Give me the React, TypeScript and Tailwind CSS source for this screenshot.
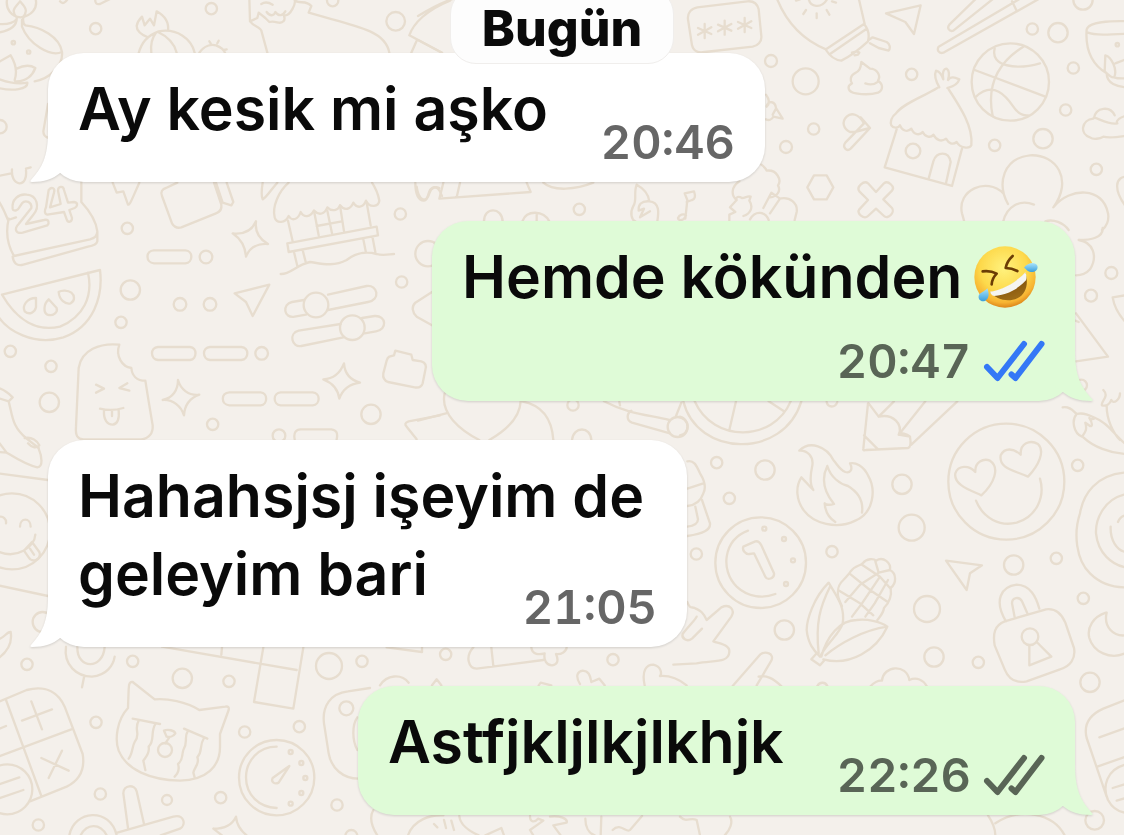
import type { ReactNode } from "react";

type Dot = [number, number, number];

/* Each patch is drawn on a grid three times finer than the page. */
function Patch({ x, y, dots, paths }: { x: number; y: number; dots: Dot[]; paths: string[] }) {
  return (
    <g transform={`translate(${x} ${y}) scale(0.33333)`}>
      {dots.map(([cx, cy, r]) => (
        <circle key={`${cx}-${cy}-${r}`} cx={cx} cy={cy} r={r} />
      ))}
      {paths.map((d) => (
        <path key={d} d={d} />
      ))}
    </g>
  );
}

function Wallpaper() {
  return (
    <svg
      aria-hidden="true"
      className="absolute inset-0 h-full w-full"
      viewBox="0 0 1124 835"
      preserveAspectRatio="xMinYMin slice"
      fill="none"
      stroke="#e7ddcf"
      strokeWidth="7"
      strokeLinecap="round"
      strokeLinejoin="round"
    >
      {/* top left: diya lamp, onion, dog, umbrella */}
      <Patch
        x={0}
        y={0}
        dots={[[287, 86, 17], [634, 26, 17], [1187, 64, 28], [998, 2, 17], [0, 380, 20], [40, 128, 5], [86, 156, 5]]}
        paths={[
          "M22 -6C14 28 36 50 62 52C92 48 116 26 106 -6M50 52C30 30 48 20 60 4C72 18 88 32 68 52",
          "M50 52C52 80 30 92 -6 98M-6 72C20 74 40 70 50 58M70 52C68 64 70 72 76 76C120 80 180 110 186 156C150 172 86 132 66 80L66 60M186 156C190 196 150 236 104 244",
          "M0 184L32 166C48 192 52 216 44 240M50 206C70 196 90 194 106 204C98 226 78 246 46 244M-6 236C30 250 60 252 82 248C84 268 40 274 -6 264M0 184L-6 188",
          "M180 4C188 14 196 8 204 -4M286 -6C284 10 290 14 300 12L336 -6",
          "M416 160C424 126 448 104 476 94C530 84 574 116 584 158M468 98C452 118 452 140 454 158M474 96C508 112 524 134 530 158M444 112C424 104 410 94 410 78C412 66 418 58 426 50L434 76L450 56L462 76L470 34C488 44 508 60 504 92",
          "M598 158C612 138 632 132 648 136C664 142 672 150 676 160M628 124L632 130M656 122L652 130M680 148L672 150",
          "M748 -6L750 64C760 78 780 82 784 92L802 158M750 64L772 54L776 38L796 54L808 66C828 60 840 76 850 64C860 56 846 44 856 46C872 46 888 10 884 0C896 14 918 -2 934 18L926 38C1000 60 1060 72 1110 94C1150 112 1164 136 1168 158M784 12C796 4 808 8 818 14M800 36C810 50 822 48 826 36C836 50 848 48 856 34",
          "M1350 2C1280 30 1240 70 1228 106L1326 158M1250 122L1234 158",
          "M144 312L130 394C130 406 136 412 146 414",
        ]}
      />

      {/* top right: password, guitar, chopsticks, ball, hut, cup */}
      <Patch
        x={660}
        y={0}
        dots={[
          [333, 183, 18], [437, 244, 39], [755, 223, 17], [461, 387, 17], [378, 441, 18], [1117, 87, 17], [1194, 98, 29], [1240, 204, 17],
          [1217, 330, 17], [1149, 416, 29], [1004, 436, 17], [1309, 508, 17], [1269, 0, 29], [1051, 246, 116], [759, 453, 22], [1372, 134, 5],
        ]}
        paths={[
          "M112 22L262 4C282 2 292 12 296 28L304 108C306 126 292 138 278 140L134 156C114 160 100 152 96 136L84 58C82 40 92 26 112 22Z",
          "M134 72V114M114 84L154 102M154 82L114 104M194 62V104M174 74L214 92M214 72L174 94M254 54V96M234 66L274 84M274 64L234 86",
          "M350 -6C380 70 430 120 498 148L612 72C626 88 628 108 624 124C600 146 572 168 544 182C526 180 508 166 498 150M510 162L620 86M596 -6L614 72M626 120L638 112L680 126C690 132 692 144 686 152L656 144L630 130M576 158L590 154L598 158L594 164L584 166",
          "M446 -4C450 22 484 26 500 0M470 40V54M438 30L430 42M500 30L508 44M408 2L420 -2M516 4L528 8",
          "M678 40L782 16L762 102L736 66Z",
          "M948 -4L868 74C860 84 868 96 880 92L1000 -4M1138 -4L850 158C836 162 830 150 836 140L1080 -4M1056 4L1070 32",
          "M944 210L1156 290M1090 140C1010 190 980 260 998 348M1004 146C990 200 1070 210 1140 190M948 290C1000 240 1040 290 1060 320C1076 344 1090 348 1104 346",
          "M1406 64C1350 62 1286 66 1280 88C1276 140 1290 190 1340 220C1340 250 1370 262 1406 262M1284 98C1310 110 1360 100 1406 102M1336 166L1334 214C1350 230 1356 234 1362 232C1374 210 1354 170 1336 166M1362 232C1374 236 1390 236 1406 234M1366 190L1392 180",
          "M604 186C602 206 598 214 584 220C570 228 570 242 576 250C560 258 562 276 588 280C612 284 640 282 654 278C670 270 670 252 654 242C664 226 650 206 630 206ZM616 250C632 256 646 252 656 244",
          "M832 264C790 290 730 310 708 340C694 350 690 366 694 376C700 386 716 384 720 376C726 392 742 398 754 386C762 406 780 406 788 396C796 412 812 414 820 404C830 422 844 426 858 416C866 430 878 436 890 426C900 444 928 448 934 436C940 380 900 320 866 268M838 262C826 240 822 224 828 212C838 214 846 226 850 238C846 220 850 206 860 206C868 212 868 226 864 240C872 228 884 232 898 238C890 260 866 262 862 264",
          "M710 388L674 502L876 558L906 446M806 536L820 484C830 454 866 452 872 486L858 550",
          "M630 384L572 446C560 456 546 442 556 428L612 370C596 342 574 336 560 350C544 366 550 386 570 396L584 396L630 384L602 352",
          "M1406 346C1380 350 1366 362 1372 370C1340 376 1300 344 1300 356C1264 360 1258 402 1290 412C1300 420 1320 416 1330 410C1350 416 1380 410 1406 406M1302 354C1308 322 1350 316 1364 346",
          "M462 526H500L520 562L500 598H462L442 562Z",
          "M624 550L648 576L672 550C684 540 706 560 696 572L670 598L696 624C706 636 684 660 672 648L648 626L624 648C612 660 588 640 598 628L624 600L598 574C588 560 612 540 624 550Z",
          "M1044 612C1010 550 1030 474 1110 466C1190 462 1240 540 1180 622C1230 560 1330 560 1344 640C1348 660 1340 680 1326 690M1030 580C980 530 890 570 906 640L912 662M1030 664C1040 620 1080 596 1122 614M1156 664C1180 656 1210 668 1226 690M1406 530C1364 526 1356 570 1406 630",
          "M318 284C330 300 330 310 320 320M320 318C326 300 346 304 348 324L368 356L340 350C336 360 326 362 318 358M338 344L348 326",
          "M76 656L82 600L74 580L102 574C108 590 104 598 96 600L80 606M76 650C70 664 54 662 54 654C58 644 70 640 78 646",
          "M304 494C312 500 318 506 320 512C350 508 366 540 354 556C364 574 350 590 330 592M238 544C214 560 212 586 230 600C226 590 236 588 246 594C256 594 264 586 272 590L268 602C280 620 274 640 250 648M208 662V644L226 636L210 622L230 600M270 658C286 630 316 634 326 660M310 624L334 578L360 596L330 640M358 596C390 588 414 610 410 636L404 660",
        ]}
      />

      {/* centre top: boat, strawberry, hand */}
      <Patch
        x={420}
        y={0}
        dots={[[478, 628, 17]]}
        paths={[
          "M-10 560C-4 604 20 610 28 580C34 560 48 560 58 564M70 548L58 596L332 576L320 548M120 548L110 592M370 548C400 576 470 568 520 548",
          "M192 664C192 620 246 620 248 664M308 662C320 630 370 630 388 664M350 640V662",
          "M650 554C640 580 652 600 640 618C628 640 636 660 646 664M650 554C676 568 686 586 688 604C664 602 654 614 656 632L672 626L660 652L690 634M688 604C720 606 716 640 712 664",
          "M-6 120L66 158M-6 48C40 20 70 6 100 -4",
        ]}
      />

      {/* left middle: calendar, camera, stall, melon, sliders, ice cream */}
      <Patch
        x={0}
        y={170}
        dots={[
          [382, 175, 17], [618, 261, 19], [391, 360, 29], [540, 403, 19], [630, 403, 19], [363, 457, 17], [31, 544, 17], [153, 589, 17],
          [148, 697, 29], [638, 763, 17], [785, 550, 19], [837, 797, 19], [1113, 733, 29], [1201, 132, 17], [1205, 336, 17], [948, 405, 37],
          [1057, 473, 37], [1284, 251, 38],
        ]}
        paths={[
          "M-6 18L34 10M36 -2C34 20 42 38 58 40C74 40 80 22 78 2M78 -4L92 -8M244 36V96C270 124 288 152 292 184V214C290 224 276 228 264 230L70 284C50 290 40 278 38 260M26 146C18 180 20 220 42 258L270 208C284 204 290 200 292 186M-6 90C8 110 16 130 24 150L48 142",
          "M38 116C34 90 56 70 80 74C112 76 120 112 100 134L78 162L132 150C148 146 148 160 142 166L68 188C46 192 42 176 56 162L94 114C96 96 76 88 66 100L58 112C54 122 40 126 38 116Z",
          "M146 60C156 48 166 56 162 68L150 112L182 102L174 62C174 48 190 46 192 60L204 98L222 96C236 98 232 110 224 114L208 120L216 144C216 156 204 160 200 148L192 126L142 134C132 132 134 120 138 112Z",
          "M338 38L350 68L370 64L384 104C390 106 400 78 418 38",
          "M486 78C480 66 488 56 498 54L532 38M642 38L664 104C666 118 660 126 648 130L544 172C530 176 522 170 516 160L486 78M648 38L668 98L694 106L700 96L680 38",
          "M768 154C764 184 776 206 804 222C770 220 748 234 738 260C736 228 724 208 698 190C732 194 756 182 768 154Z",
          "M788 38C784 64 784 80 788 88C800 82 812 60 832 38M866 38C836 64 816 110 824 142C830 162 856 160 866 138C876 154 894 150 902 126C912 144 930 142 942 122C958 138 974 132 982 112C996 126 1014 122 1020 106C1034 124 1052 118 1060 98C1070 116 1090 114 1098 92C1110 116 1136 110 1138 92C1134 70 1124 50 1116 38",
          "M864 152L878 214M1100 98L1112 166M942 122L956 196M1020 106L1032 184M982 122L996 190M950 168L1026 154M862 220L1130 170L1134 196L866 246ZM882 246L892 288M908 240L918 280M1090 208L1098 248M1118 204L1126 246M842 312C870 314 890 284 930 276C960 280 1000 292 1040 270C1070 246 1100 244 1130 252C1150 258 1170 252 1182 252",
          "M6 374L300 300C310 380 280 470 190 502C100 530 20 480 -6 438M6 374C50 450 110 486 180 470C250 440 280 380 264 308",
          "M108 384C80 384 66 408 74 424C88 436 104 428 108 412ZM146 388C130 402 130 428 142 434C160 440 174 426 170 414ZM176 366C178 390 196 404 212 400C226 392 224 376 214 368C204 360 184 360 176 366Z",
          "M462 241H556C580 242 580 278 556 280H462C436 278 436 242 462 241Z",
          "M474 531H570C592 532 592 568 570 570H474C450 568 450 532 474 531ZM630 531H724C748 532 748 568 724 570H630C606 568 606 532 630 531ZM688 667H782C804 668 804 704 782 706H688C662 704 662 668 688 667ZM842 667H938C962 668 962 704 938 706H842C818 704 818 668 842 667ZM884 808C880 788 888 778 902 778H994C1010 780 1014 790 1010 808",
          "M704 370L808 344L758 438L738 396Z",
          "M912 390L876 396C846 402 850 446 884 440L918 434M984 374L1100 348C1134 344 1142 390 1104 396L984 420M1022 462L896 482C864 490 876 534 904 528L1030 502M1086 444L1124 438C1160 436 1162 480 1128 484L1094 490",
          "M1296 366L1246 398C1234 410 1236 426 1250 440L1296 466",
          "M1168 560L1182 556L1186 542L1234 554L1238 570L1264 574C1276 578 1280 588 1276 600L1268 640C1264 652 1256 654 1244 652L1164 636C1150 630 1148 622 1150 610L1160 572C1162 564 1164 562 1168 560Z",
          "M358 524C300 518 244 540 236 594L228 770C226 796 232 808 250 808H424C446 806 460 790 458 766L446 694L436 632C410 632 396 616 394 594C366 590 346 558 358 524Z",
          "M288 644L312 656L288 668M382 640L358 654L388 662M300 716C324 722 350 720 370 714M312 720C310 750 322 764 338 764C354 762 358 742 356 720M336 722V738",
          "M534 630C542 658 566 678 598 674C570 684 554 704 552 736C544 710 520 688 488 690C518 684 534 660 534 630Z",
          "M1032 580C1034 610 1052 630 1080 638C1048 642 1028 658 1018 686C1014 658 996 638 970 628C1002 626 1022 606 1032 580Z",
          "M-6 654C10 658 24 668 38 682L26 694L-6 684M26 694C38 740 36 770 80 806L116 834M74 804C96 800 112 812 118 826C108 836 94 832 84 820",
          "M1320 736L1226 754C1214 758 1214 764 1220 770L1250 808",
          "M1246 38C1246 60 1250 90 1272 92C1288 90 1282 60 1296 54C1310 46 1320 60 1326 78",
        ]}
      />

      {/* left edge beside the third bubble */}
      <Patch
        x={0}
        y={380}
        dots={[[36, 454, 114], [128, 726, 30]]}
        paths={[
          "M116 206C126 230 130 260 112 262C80 256 40 230 20 218L-6 216M20 218L-6 184M-6 280L144 300M-6 616L144 648M-6 412C10 404 20 420 18 430M60 440C60 412 92 412 92 440M-6 514C50 540 104 500 106 464M72 512L96 486L118 516C126 540 96 550 86 532ZM90 506L102 524M-6 778C12 776 20 754 32 756C38 790 18 818 -6 836",
        ]}
      />

      {/* strip between the second and third bubbles */}
      <Patch
        x={420}
        y={380}
        dots={[[459, 75, 17], [773, 141, 30]]}
        paths={[
          "M74 40C60 100 120 150 178 180M302 64C300 110 260 150 208 180M-6 122L78 100M306 64C370 76 396 120 400 180M456 180C460 138 512 138 514 180M552 64C620 100 680 104 748 120M634 92C620 100 618 120 636 128L750 160M598 66L600 76M768 108L784 68",
        ]}
      />

      {/* right middle */}
      <Patch
        x={960}
        y={230}
        dots={[[454, 129, 18], [393, 197, 18], [364, 466, 17]]}
        paths={[
          "M358 30C390 30 430 24 428 -6M356 30C400 36 414 80 390 118C378 132 364 136 348 136M348 250L444 380L348 394M346 272L356 276M496 196L458 202C462 228 478 256 496 276",
        ]}
      />

      {/* right: wheel, pencil, flame, coin, corn, smiley, padlock, eggplant */}
      <Patch
        x={680}
        y={390}
        dots={[
          [110, 218, 17], [255, 240, 29], [148, 325, 17], [49, 492, 17], [456, 485, 17], [313, 720, 29], [666, 283, 29], [695, 413, 39],
          [741, 657, 39], [762, 801, 29], [895, 817, 17], [1001, 525, 29], [1129, 505, 17], [1193, 226, 17], [1210, 625, 17], [1230, 877, 29],
          [242, 518, 136], [979, 275, 174], [253, 416, 6], [312, 447, 6], [339, 511, 6], [318, 582, 6], [1050, 740, 25],
        ]}
        paths={[
          "M10 34C50 200 310 210 364 34M44 34C100 160 280 156 332 34M168 34L148 120M266 34L312 64M440 36C444 54 466 54 472 36",
          "M0 80C30 88 30 130 0 136M22 214C40 210 48 222 60 250C74 272 80 290 70 310C60 340 40 346 22 348M22 296L70 280M66 330L90 400C92 420 70 430 22 438M46 350L54 388C54 402 40 408 22 410",
          "M564 40L550 176C548 180 552 182 558 180L684 174C692 172 694 164 690 140L656 134C670 104 640 70 596 80L566 40M642 34L596 80M736 34L656 134M832 34L694 164M690 140C680 130 664 128 656 134M552 136L594 178",
          "M358 182C380 180 404 198 396 232C390 260 390 284 400 300L364 262C346 290 348 330 372 362C400 400 470 420 526 392C580 370 590 300 564 256C550 228 526 216 510 220C520 240 510 250 496 246C480 240 472 224 460 210C440 170 390 150 358 182Z",
          "M442 228C426 260 428 300 462 342C450 346 438 344 434 340C436 368 450 386 466 396M442 228C452 262 480 282 504 288C540 310 550 340 546 368",
          "M204 422C130 450 120 540 170 590C204 622 250 626 286 612M190 470L226 454C236 452 240 458 244 466L282 550C284 566 262 572 256 560L222 490L208 492C196 494 186 480 190 470Z",
          "M446 578C400 624 380 690 380 720C384 760 400 780 420 800C440 760 480 730 488 700C496 650 470 620 446 578ZM450 590C420 650 406 700 416 790M424 800C440 740 480 690 530 690C560 686 600 694 622 710C590 780 510 830 430 808M622 710C550 720 480 760 436 796M410 790L394 808L420 826L432 812",
          "M486 648C470 620 468 590 490 570C500 560 508 552 512 544C524 526 540 528 548 520C560 504 582 506 588 512C610 498 634 518 630 540C650 550 650 580 632 594C636 620 626 640 612 654C610 670 600 680 592 690M474 600L540 640L580 676M508 550L570 600L620 634M546 524L600 560L632 596M586 514L596 548L540 584L496 636M596 548L630 540M600 560L546 640L516 680M624 570L584 640L556 680",
          "M904 316C870 300 820 284 826 250C834 226 866 224 886 246C884 216 910 204 930 212C960 232 944 280 904 316ZM1044 260C1000 240 956 236 962 196C974 172 1000 174 1022 194C1020 160 1050 148 1074 162C1096 184 1076 226 1044 260ZM888 332C910 386 960 410 1010 398C1070 380 1096 320 1080 266",
          "M798 512L906 526L870 550L860 600Z",
          "M978 694C940 630 964 590 1010 584C1052 586 1068 620 1078 656M1004 682L996 640C996 622 1018 618 1026 634L1042 670M974 694L1098 658C1130 654 1146 674 1156 698L1182 774C1188 806 1170 830 1140 838L1040 874C1010 880 986 868 974 838L944 766C938 730 944 706 974 694ZM1048 766V826L1114 800L1070 756",
          "M1332 248C1250 256 1210 310 1200 370C1180 430 1188 510 1230 550C1260 580 1300 592 1336 592M1332 314C1270 330 1246 390 1248 430C1254 490 1296 524 1336 532M1314 396C1320 380 1330 376 1340 376M1292 410C1290 450 1310 480 1336 486M1278 668C1240 680 1220 712 1228 744C1240 786 1290 810 1336 790M1280 668C1270 710 1300 740 1336 736",
          "M1148 52C1170 48 1180 64 1190 72M1190 72C1210 66 1230 76 1246 84C1236 90 1230 88 1228 84C1238 100 1238 110 1230 108L1216 98C1222 120 1216 126 1206 140C1180 130 1174 90 1190 72ZM1246 84C1280 96 1300 130 1336 162M1210 142C1240 170 1290 190 1336 192M1270 0C1290 20 1260 36 1266 46C1280 50 1290 40 1294 30C1300 44 1320 30 1320 10M1280 48C1280 90 1300 130 1320 150",
          "M22 636C30 660 36 648 48 656C60 662 68 664 80 690L124 652C150 640 166 660 154 680L100 754C120 762 150 764 148 786C146 820 100 810 50 820L-20 824M66 716L36 746C20 758 4 744 8 732C24 710 46 690 50 680",
          "M158 888L240 794C256 782 284 790 274 812L230 886M236 860C260 854 280 866 304 888M572 888C580 880 590 870 606 872C610 826 680 820 688 870C710 860 730 870 740 888M412 888C418 876 436 874 442 888",
        ]}
      />

      {/* bottom left: calculator, crying cat, dial */}
      <Patch
        x={0}
        y={600}
        dots={[
          [81, 193, 17], [398, 184, 17], [547, 235, 29], [687, 244, 17], [987, 198, 39], [1086, 184, 17], [1039, 325, 21], [734, 396, 17],
          [898, 380, 17], [288, 367, 17], [301, 582, 17], [501, 600, 15], [662, 593, 17], [115, 675, 17], [1011, 615, 17], [1054, 708, 18],
          [830, 533, 113], [872, 456, 6], [904, 489, 6], [916, 534, 6], [904, 579, 6], [872, 611, 6], [495, 450, 21], [22, 568, 75],
        ]}
        paths={[
          "M-6 306L80 270C140 254 176 280 194 320L248 462C256 510 240 540 200 560L90 604M18 300L124 588M-6 470L214 388M94 304L126 388M66 362L156 328M124 474L206 512M186 452L146 534M-6 388L18 378M-6 554L58 532M-6 596L70 570",
          "M198 140C190 194 230 230 276 230C320 226 340 196 344 170M232 140C230 210 310 210 314 140M252 232L246 262",
          "M486 140L890 210M666 142L664 164M790 142L762 306L880 326L910 142",
          "M398 246C390 244 386 252 386 268L384 324C350 360 344 420 356 452C380 510 450 540 540 542C620 540 660 500 660 440V402L686 330C688 322 684 318 676 320L598 330C560 306 500 294 464 298Z",
          "M398 356L480 372M552 386L622 416M416 362C400 390 424 402 404 426C396 440 398 460 386 476M466 372C450 400 466 420 446 440C450 460 438 470 430 482L436 510M564 392C550 414 566 424 550 450C544 470 550 480 534 492C540 510 534 520 524 530M612 414C596 440 610 450 592 472C600 490 584 500 580 518L584 532M492 392C504 386 524 392 526 400C520 410 508 412 500 410ZM508 412L496 430",
          "M830 440C774 440 738 484 738 532C738 584 776 622 830 624M868 498L818 534C812 546 824 554 836 548Z",
          "M1110 264L1044 274C990 280 966 320 972 370L986 460C994 506 1030 536 1076 536M1072 352C1056 374 1056 420 1072 450",
          "M384 684L370 580C370 554 404 552 410 574L432 672M352 698L520 650C552 642 560 674 540 686L482 706M208 706C222 630 330 620 350 706M242 706C260 670 300 668 320 706M640 686C674 686 696 676 708 650C710 674 722 692 740 706M640 686L666 706",
        ]}
      />

      {/* bottom centre */}
      <Patch
        x={300}
        y={600}
        dots={[[437, 163, 17], [939, 179, 17]]}
        paths={[
          "M260 142L366 156V142M520 142C494 170 506 206 530 206L730 180M574 142L580 198M694 142C696 166 720 164 734 160C730 180 740 196 756 196C774 194 776 180 768 162C784 164 800 154 800 142",
          "M240 256C260 224 304 220 326 248M396 256L410 238L424 256M716 256L722 248L754 256M840 252C824 226 834 214 848 212C870 214 870 230 874 246L898 236L914 256M1034 256C1024 210 1040 194 1060 194C1084 200 1086 220 1080 228C1110 226 1140 240 1160 256",
          "M220 630C206 654 218 684 232 706M324 706C340 660 390 644 430 646M402 672L412 682M432 660L438 684M454 662L462 690M478 648C480 670 500 690 536 706M556 706L604 684L612 706M690 648C690 668 704 668 714 656L730 662L690 690L700 706M750 650C780 646 804 656 800 668L760 676L782 706M856 656C856 680 866 700 884 706M904 650L902 706M938 690C960 666 980 700 990 690L1026 648M1140 650C1160 670 1170 650 1190 660L1200 706M1290 650C1300 666 1290 690 1274 706",
        ]}
      />

      {/* bottom right */}
      <Patch
        x={970}
        y={680}
        dots={[[374, 421, 28]]}
        paths={[
          "M466 60L400 86C360 104 340 134 350 174L410 350M388 172L466 144M382 260L466 230M466 254C410 268 396 320 414 360C430 390 450 396 466 398M428 324L466 312M440 362L466 354M54 406C70 430 76 446 76 466M76 430C150 380 250 400 284 466",
        ]}
      />
    </svg>
  );
}

function LaughingFace() {
  return (
    <svg role="img" aria-label="🤣" viewBox="0 0 192 188" className="h-16 w-16 shrink-0">
      <defs>
        <radialGradient id="face" cx="0.48" cy="0.36" r="0.64">
          <stop offset="0" stopColor="#fff27e" />
          <stop offset="0.6" stopColor="#fdd94b" />
          <stop offset="0.87" stopColor="#f7b332" />
          <stop offset="1" stopColor="#dd861b" />
        </radialGradient>
        <linearGradient id="tear" x1="0" y1="0" x2="0" y2="1">
          <stop offset="0" stopColor="#a9e4fb" />
          <stop offset="1" stopColor="#3a9fdc" />
        </linearGradient>
        <linearGradient id="mouth" x1="0" y1="0" x2="0.4" y2="1">
          <stop offset="0" stopColor="#6b3d05" />
          <stop offset="1" stopColor="#9b6a16" />
        </linearGradient>
      </defs>
      <circle cx="93" cy="94" r="92" fill="url(#face)" />
      <path d="M48 140C88 134 124 114 154 82C164 112 158 144 130 158C100 172 66 160 48 140Z" fill="url(#mouth)" />
      <path d="M48 138C86 132 124 112 154 80C157 88 159 96 156 104C130 132 98 148 60 151C54 149 50 144 48 138Z" fill="#f5f5f2" />
      <path d="M26 77C42 75 57 78 68 84C60 92 54 104 53 116M116 31C104 42 97 55 95 67C106 67 119 70 130 76" fill="none" stroke="#6b3d05" strokeWidth="8" strokeLinecap="round" strokeLinejoin="round" />
      <path d="M150 66C162 50 184 48 190 60C194 74 180 82 167 78C159 76 155 68 150 66Z" fill="url(#tear)" />
      <path d="M40 128C46 144 46 158 34 165C22 170 12 162 14 150C18 140 32 138 40 128Z" fill="url(#tear)" />
    </svg>
  );
}

function Ticks({ label, className }: { label: string; className: string }) {
  return (
    <svg role="img" aria-label={label} viewBox="0 0 62 42" className={`h-[42px] w-[62px] shrink-0 ${className}`} fill="none" stroke="currentColor" strokeWidth="6" strokeLinecap="round" strokeLinejoin="round">
      <path d="M4 27L14.500 38L41 4" />
      <path d="M28.500 34.500L32.500 38L58.500 4" />
    </svg>
  );
}

function Tail({ mine }: { mine?: boolean }) {
  return (
    <svg
      aria-hidden="true"
      viewBox="0 0 50 50"
      fill="currentColor"
      className={
        mine
          ? "absolute -right-[18px] bottom-0 h-[50px] w-[50px] -scale-x-100 text-[#dffbd7]"
          : "absolute bottom-0 -left-[18px] h-[50px] w-[50px] text-white"
      }
    >
      <path d="M18 0C18 25 12 36 1 48C0 49 0 50 2 50C14 50 23 47 30 41L50 28V0Z" />
    </svg>
  );
}

function Bubble({ mine, className, children }: { mine?: boolean; className: string; children: ReactNode }) {
  const tone = mine ? "self-end bg-[#dffbd7]" : "self-start bg-white";
  return (
    <li className={`relative flex max-w-full rounded-[36px] px-[30px] pt-[17px] pb-3 drop-shadow-[0_1px_1px_rgba(0,0,0,0.14)] ${tone} ${className}`}>
      <Tail mine={mine} />
      {children}
    </li>
  );
}

const message = "text-[59px] leading-[78px] font-semibold text-[#0a0a0a]";
const stamp = "text-[47px] leading-[56px] font-semibold tabular-nums";

export default function App() {
  return (
    <main className="relative min-h-screen overflow-hidden bg-[#f4f0eb] font-['Inter','Liberation_Sans',sans-serif]">
      <Wallpaper />
      <div className="absolute inset-x-0 top-0 z-10 flex justify-center">
        <h1 className="-mt-3 rounded-[26px] border border-[#f0eeec] bg-[#fdfdfd] px-[31px] pt-[9px] pb-[5px] text-[50px] leading-[60px] font-extrabold text-[#0a0a0a]">
          Bugün
        </h1>
      </div>
      <ol className="relative flex flex-col gap-[39px] pt-[53px] pr-[49px] pb-5 pl-12">
        <Bubble className="w-[717px] items-end justify-between">
          <p className={`${message} pb-[22px]`}>Ay kesik mi aşko</p>
          <time className={`${stamp} text-[#666666]`}>20:46</time>
        </Bubble>
        <Bubble mine className="w-[643px] flex-col gap-[17px]">
          <p className={`${message} flex items-center gap-3 whitespace-nowrap`}>
            Hemde kökünden
            <LaughingFace />
          </p>
          <div className="flex items-center justify-end gap-3">
            <time className={`${stamp} text-[#596556]`}>20:47</time>
            <Ticks label="Okundu" className="text-[#3478f6]" />
          </div>
        </Bubble>
        <Bubble className="w-[639px] items-end justify-between">
          <p className={`${message} pb-[22px] whitespace-nowrap`}>
            Hahahsjsj işeyim de
            <br />
            geleyim bari
          </p>
          <time className={`${stamp} -ml-32 text-[#666666]`}>21:05</time>
        </Bubble>
        <Bubble mine className="w-[717px] items-end justify-between">
          <p className={`${message} pb-[22px]`}>Astfjkljlkjlkhjk</p>
          <div className="flex items-center gap-3">
            <time className={`${stamp} text-[#596556]`}>22:26</time>
            <Ticks label="İletildi" className="text-[#596556]" />
          </div>
        </Bubble>
      </ol>
    </main>
  );
}
